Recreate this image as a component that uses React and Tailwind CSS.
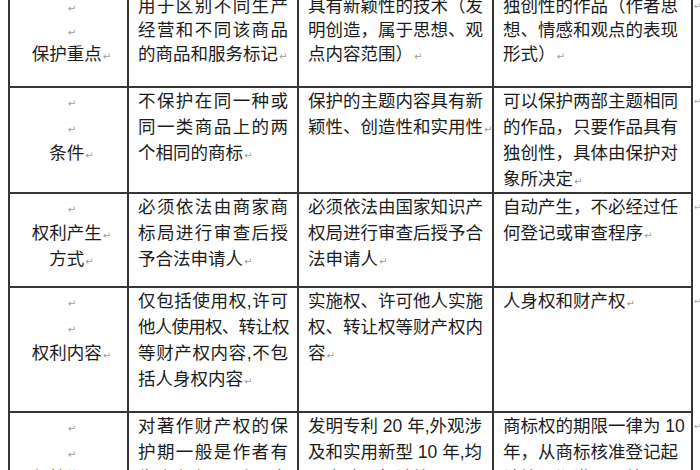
import React from "react";

const rows = [
  {
    h: "h-[94px]",
    lh: 24,
    c1: [["", 1], ["", 1], ["保护重点", 1]],
    c2: [["用于区别不同生产", 0, 1], ["经营和不同该商品", 0, 1], ["的商品和服务标记", 1]],
    c3: [["具有新颖性的技术（发"], ["明创造，属于思想、观"], ["点内容范围）", 1]],
    c4: [["独创性的作品（作者思"], ["想、情感和观点的表现"], ["形式）", 1]],
  },
  {
    h: "h-[106px]",
    lh: 26,
    c1: [["", 1], ["", 1], ["条件", 1]],
    c2: [["不保护在同一种或", 0, 1], ["同一类商品上的两", 0, 1], ["个相同的商标", 1]],
    c3: [["保护的主题内容具有新"], ["颖性、创造性和实用性", 1]],
    c4: [["可以保护两部主题相同"], ["的作品，只要作品具有"], ["独创性，具体由保护对"], ["象所决定", 1]],
  },
  {
    h: "h-[94px]",
    lh: 26,
    c1: [["", 1], ["权利产生", 1], ["方式", 1]],
    c2: [["必须依法由商家商", 0, 1], ["标局进行审查后授", 0, 1], ["予合法申请人", 1]],
    c3: [["必须依法由国家知识产"], ["权局进行审查后授予合"], ["法申请人", 1]],
    c4: [["自动产生，不必经过任"], ["何登记或审查程序", 1]],
  },
  {
    h: "h-[125px]",
    lh: 26,
    c1: [["", 1], ["", 1], ["权利内容", 1]],
    c2: [["仅包括使用权,许可", 0, 1], ["他人使用权、转让权", 0, 2], ["等财产权内容,不包", 0, 1], ["括人身权内容", 1]],
    c3: [["实施权、许可他人实施"], ["权、转让权等财产权内"], ["容", 1]],
    c4: [["人身权和财产权", 1]],
  },
  {
    h: "h-[147px]",
    lh: 26,
    c1: [["", 1], ["", 1], ["保护期限", 1]],
    c2: [["对著作财产权的保", 0, 1], ["护期一般是作者有", 0, 1], ["生之年加死后五十", 0, 1]],
    c3: [["发明专利 20 年,外观涉"], ["及和实用新型 10 年,均"], ["从申请日起计算"]],
    c4: [["商标权的期限一律为 10"], ["年，从商标核准登记起"], ["计算，期满可以续展"]],
  },
];

function Mark() {
  return (
    <span className="ml-px text-[10px] text-[#9d9d9d] font-['DejaVu_Sans',sans-serif]">↵</span>
  );
}

function Line({ t, m, j, lh, center }) {
  const lhc = lh === 24 ? "h-[24px] leading-[24px]" : "h-[26px] leading-[26px]";
  let jc = "";
  if (j === 1) jc = "[text-align-last:justify]";
  if (j === 2) jc = "[text-align-last:justify] tracking-[-1.4px]";
  return (
    <div className={`${lhc} whitespace-nowrap ${center ? "text-center" : ""} ${jc}`}>
      {t}
      {m ? <Mark /> : null}
    </div>
  );
}

function Cell({ lines, lh, w, px, center }) {
  return (
    <div className={`${w} ${px} shrink-0 border-r-2 border-[#363636] overflow-hidden`}>
      {lines.map((l, i) => (
        <Line key={i} t={l[0]} m={l[1]} j={l[2]} lh={lh} center={center} />
      ))}
    </div>
  );
}

export default function App() {
  return (
    <div className="w-[700px] h-[470px] overflow-hidden bg-white text-[17.5px] text-[#1c1c1c] font-['Liberation_Sans','Noto_Sans_CJK_SC',sans-serif]">
      <div className="-mt-[6px] ml-[8px] flex flex-col">
        {rows.map((r, i) => (
          <div key={i} className={`flex ${r.h}`}>
            <div className="flex border-l-2 border-b-2 border-[#363636]">
              <Cell lines={r.c1} lh={r.lh} w="w-[119px]" px="pl-[8px] pr-[2px]" center />
              <Cell lines={r.c2} lh={r.lh} w="w-[170px]" px="pl-[9px] pr-[9px]" />
              <Cell lines={r.c3} lh={r.lh} w="w-[195px]" px="pl-[9px]" />
              <Cell lines={r.c4} lh={r.lh} w="w-[199px]" px="pl-[9px]" />
            </div>
            <div className={`pl-[1px] text-[9px] text-[#a8a8a8] font-['DejaVu_Sans',sans-serif] ${r.lh === 24 ? "leading-[24px]" : "leading-[26px]"}`}>
              ↵
            </div>
          </div>
        ))}
      </div>
    </div>
  );
}
